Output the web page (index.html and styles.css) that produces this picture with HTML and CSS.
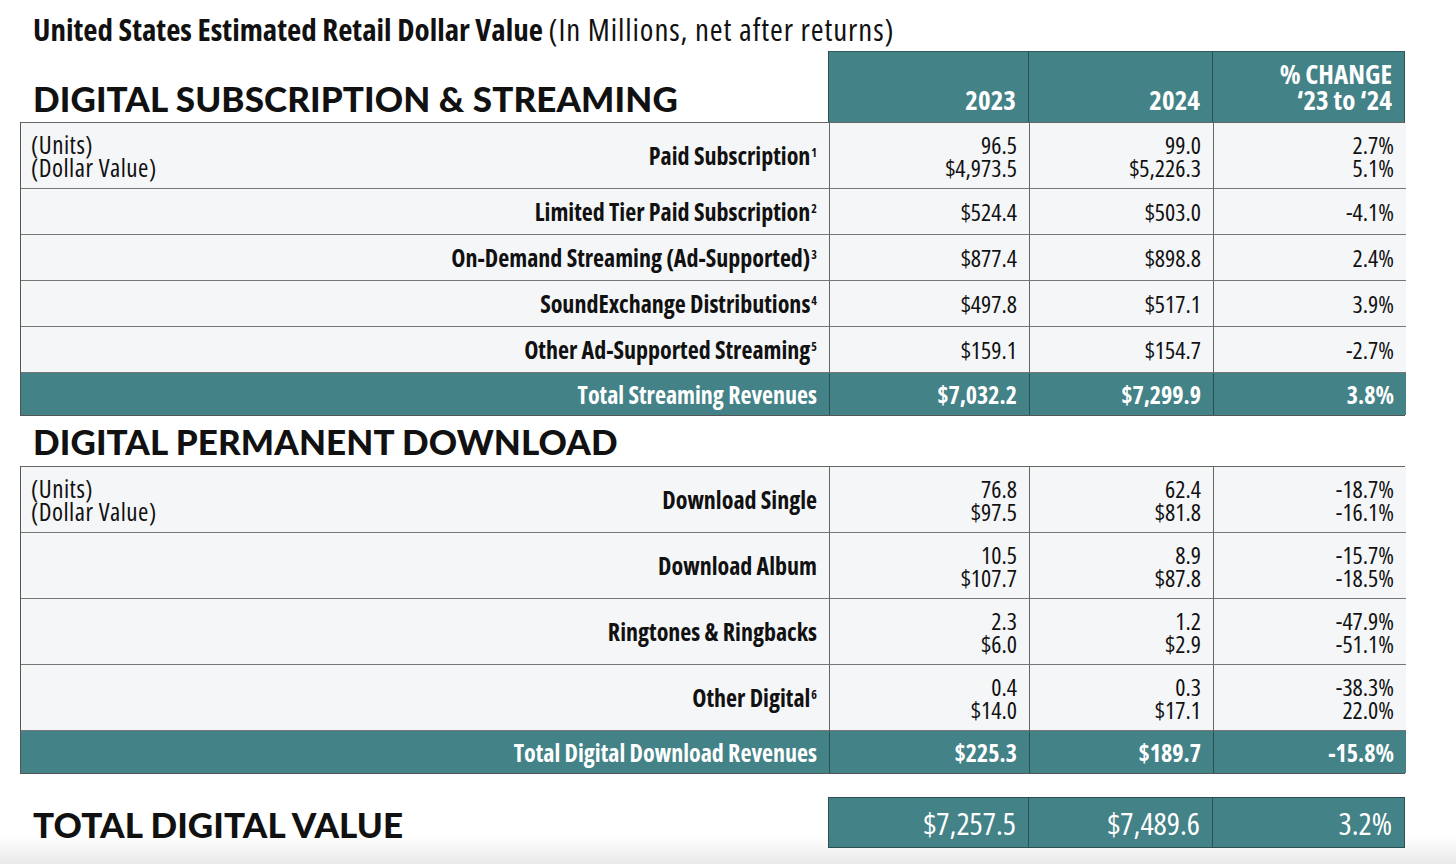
FILE: index.html
```html
<!DOCTYPE html>
<html>
<head>
<meta charset="utf-8">
<link rel="stylesheet" href="styles.css">
</head>
<body>
<div class="page">
  <h1 class="title"><b>United States Estimated Retail Dollar Value</b> <span class="sub">(In Millions, net after returns)</span></h1>

  <div class="grid head">
    <div class="section">DIGITAL SUBSCRIPTION &amp; STREAMING</div>
    <div class="hcell">2023</div>
    <div class="hcell">2024</div>
    <div class="hcell">% CHANGE<br>‘23 to ‘24</div>
  </div>

  <div class="grid table">
    <div class="cell label tall"><span class="units">(Units)<br>(Dollar Value)</span><b>Paid Subscription<sup>1</sup></b></div>
    <div class="cell num">96.5<br>$4,973.5</div>
    <div class="cell num">99.0<br>$5,226.3</div>
    <div class="cell num">2.7%<br>5.1%</div>

    <div class="cell label"><b>Limited Tier Paid Subscription<sup>2</sup></b></div>
    <div class="cell num">$524.4</div>
    <div class="cell num">$503.0</div>
    <div class="cell num">-4.1%</div>

    <div class="cell label"><b>On-Demand Streaming (Ad-Supported)<sup>3</sup></b></div>
    <div class="cell num">$877.4</div>
    <div class="cell num">$898.8</div>
    <div class="cell num">2.4%</div>

    <div class="cell label"><b>SoundExchange Distributions<sup>4</sup></b></div>
    <div class="cell num">$497.8</div>
    <div class="cell num">$517.1</div>
    <div class="cell num">3.9%</div>

    <div class="cell label"><b>Other Ad-Supported Streaming<sup>5</sup></b></div>
    <div class="cell num">$159.1</div>
    <div class="cell num">$154.7</div>
    <div class="cell num">-2.7%</div>

    <div class="cell total label">Total Streaming Revenues</div>
    <div class="cell total num">$7,032.2</div>
    <div class="cell total num">$7,299.9</div>
    <div class="cell total num">3.8%</div>
  </div>

  <div class="section section2">DIGITAL PERMANENT DOWNLOAD</div>

  <div class="grid table">
    <div class="cell label tall"><span class="units">(Units)<br>(Dollar Value)</span><b>Download Single</b></div>
    <div class="cell num">76.8<br>$97.5</div>
    <div class="cell num">62.4<br>$81.8</div>
    <div class="cell num">-18.7%<br>-16.1%</div>

    <div class="cell label tall"><b>Download Album</b></div>
    <div class="cell num">10.5<br>$107.7</div>
    <div class="cell num">8.9<br>$87.8</div>
    <div class="cell num">-15.7%<br>-18.5%</div>

    <div class="cell label tall"><b>Ringtones &amp; Ringbacks</b></div>
    <div class="cell num">2.3<br>$6.0</div>
    <div class="cell num">1.2<br>$2.9</div>
    <div class="cell num">-47.9%<br>-51.1%</div>

    <div class="cell label tall"><b>Other Digital<sup>6</sup></b></div>
    <div class="cell num">0.4<br>$14.0</div>
    <div class="cell num">0.3<br>$17.1</div>
    <div class="cell num">-38.3%<br>22.0%</div>

    <div class="cell total label">Total Digital Download Revenues</div>
    <div class="cell total num">$225.3</div>
    <div class="cell total num">$189.7</div>
    <div class="cell total num">-15.8%</div>
  </div>

  <div class="grid grand">
    <div class="section">TOTAL DIGITAL VALUE</div>
    <div class="gcell">$7,257.5</div>
    <div class="gcell">$7,489.6</div>
    <div class="gcell">3.2%</div>
  </div>
</div>
</body>
</html>
```

FILE: styles.css
```css
html {
  background: linear-gradient(to bottom, #ffffff 0, #ffffff 836px, #e9e9e9 864px);
  min-height: 100%;
}
body {
  margin: 0;
  font-family: "Open Sans", "DejaVu Sans", sans-serif;
  font-stretch: 75%;
  color: #111;
}
.page {
  padding: 12px 0 0 20px;
  width: 1385px;
}
.title {
  margin: 0 0 0 13px;
  font-size: 31px;
  font-weight: normal;
  line-height: 34px;
  height: 39px;
}
.title b { font-weight: bold; }
.title .sub { letter-spacing: 0.9px; }

.grid {
  display: grid;
  grid-template-columns: 808px 200px 184px 193px;
}
.section {
  font-family: "Lato", "Noto Sans", sans-serif;
  font-stretch: normal;
  font-weight: 900;
  font-size: 35px;
  letter-spacing: 0.1px;
  color: #111;
  padding-left: 13px;
  align-self: end;
  line-height: 40px;
}
.head .section { padding-bottom: 4px; }
.hcell {
  background: #438287;
  color: #fff;
  font-weight: bold;
  font-size: 27px;
  line-height: 26px;
  height: 71px;
  box-sizing: border-box;
  display: flex;
  align-items: flex-end;
  justify-content: flex-end;
  text-align: right;
  padding: 0 12px 9px 0;
  border-top: 1px solid #2f5e62;
  border-left: 1px solid #2c4f52;
}
.hcell:last-child { border-right: 1px solid #2c4f52; }

.table {
  border: 1px solid #555;
  border-top: 1px solid #666;
}
.cell {
  background: #f5f6f8;
  min-height: 46px;
  box-sizing: border-box;
  display: flex;
  align-items: center;
  justify-content: flex-end;
  text-align: right;
  padding: 0 12px 0 10px;
  font-size: 24px;
  line-height: 23px;
  border-bottom: 1px solid #777;
  border-left: 1px solid #666;
}
.cell.label { border-left: none; }
.cell.tall { min-height: 66px; justify-content: space-between; }
.label.tall:not(:has(.units)) { justify-content: flex-end; }
.units {
  text-align: left;
  font-weight: normal;
  font-size: 25px;
  letter-spacing: 0.5px;
}
.cell b { font-weight: bold; }
sup {
  font-size: 12px;
  vertical-align: 8px;
  line-height: 0;
  margin-left: 1px;
}
.cell.total {
  background: #438287;
  color: #fff;
  font-weight: bold;
  min-height: 42px;
  border-bottom: none;
  border-left-color: #2c4f52;
}
.cell.total.label { border-left: none; }

.section2 {
  height: 50px;
  box-sizing: border-box;
  line-height: 50px;
}

.grand { margin-top: 23px; }
.grand .section { align-self: center; padding-top: 3px; }
.gcell {
  background: #438287;
  color: #fff;
  font-size: 31px;
  height: 51px;
  box-sizing: border-box;
  display: flex;
  align-items: center;
  justify-content: flex-end;
  padding-right: 12px;
  border-top: 1px solid #2c4f52;
  border-bottom: 1px solid #2c4f52;
  border-left: 1px solid #2c4f52;
}
.gcell:last-child { border-right: 1px solid #2c4f52; }
```
